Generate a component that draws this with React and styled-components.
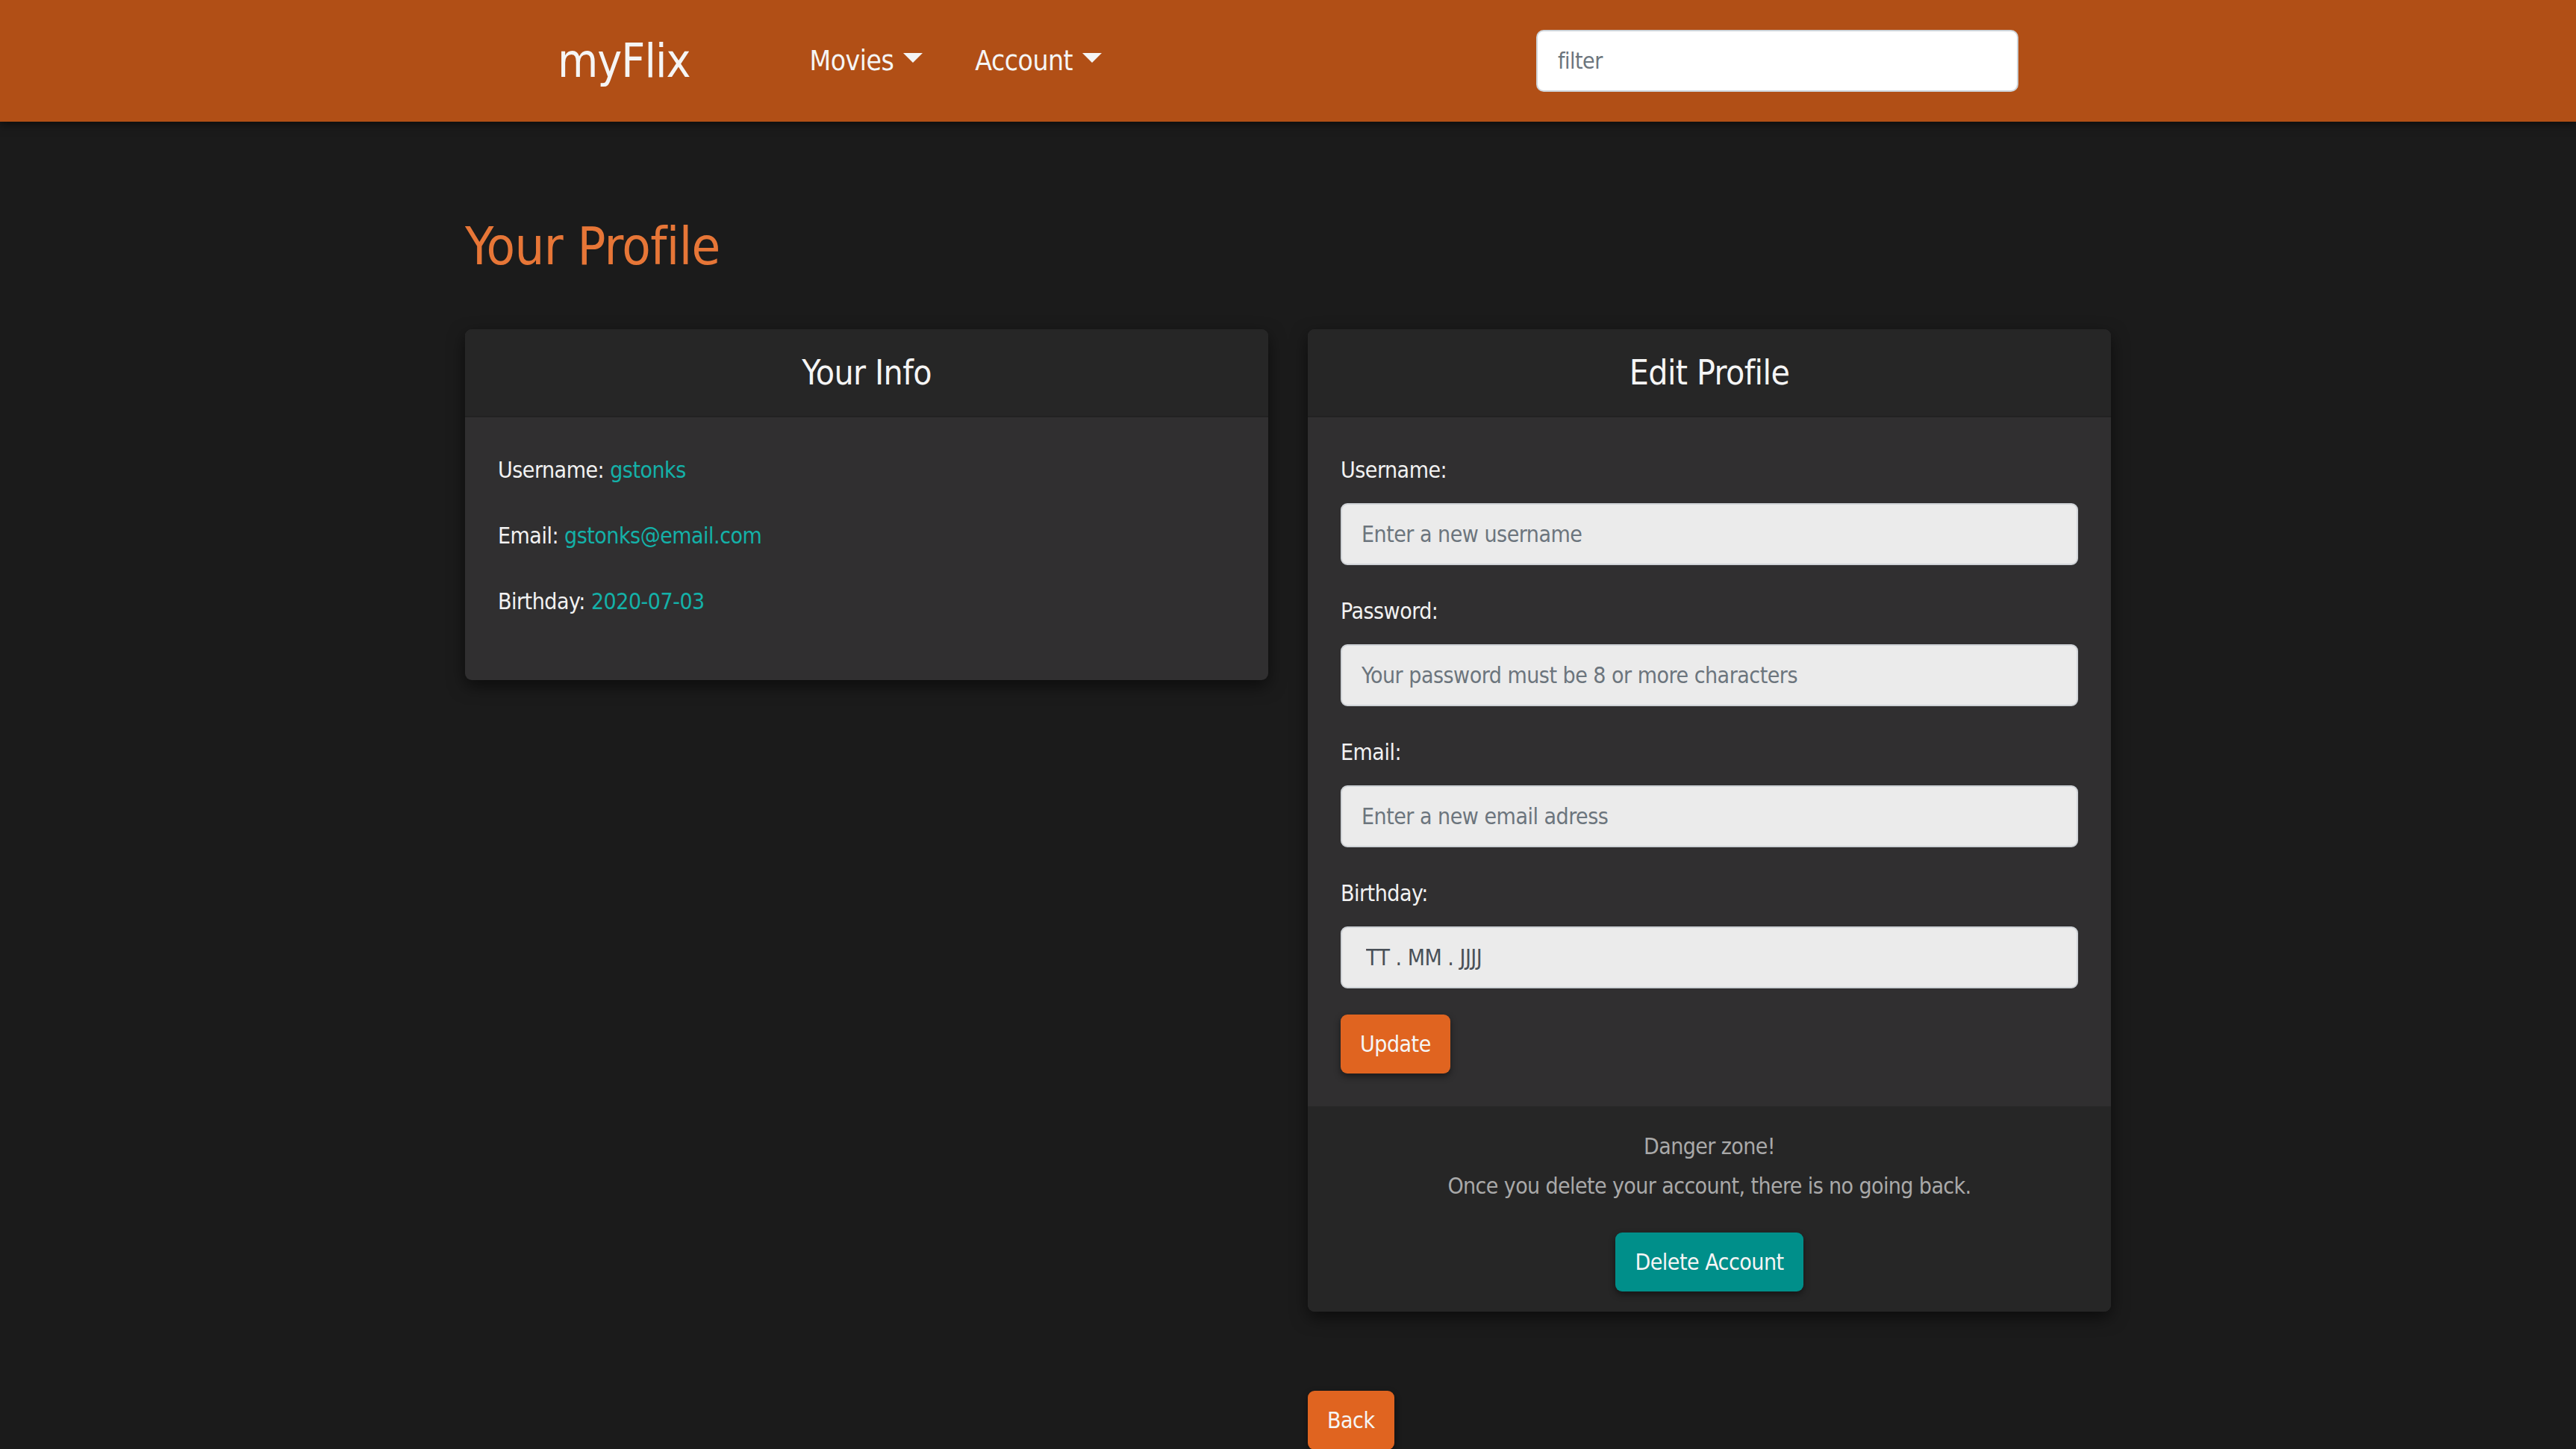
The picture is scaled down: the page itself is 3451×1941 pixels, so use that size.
import React from 'react';
import styled, { createGlobalStyle } from 'styled-components';

const GlobalStyle = createGlobalStyle`
  * {
    box-sizing: border-box;
  }
  body {
    margin: 0;
    background: #1b1b1b;
    color: #f2f2f2;
    font-family: "DejaVu Sans Condensed", "Liberation Sans Narrow", "Roboto Condensed", sans-serif;
    font-size: 30px;
    letter-spacing: -0.5px;
    line-height: 53px;
  }
`;

const Navbar = styled.nav`
  position: relative;
  z-index: 1;
  height: 163px;
  background: #b14f16;
  box-shadow: 0 3px 12px rgba(0, 0, 0, 0.6);
  display: flex;
  align-items: center;
`;

const NavInner = styled.div`
  width: 1957px;
  margin: 0 auto;
  display: flex;
  align-items: center;
`;

const Brand = styled.a`
  color: #f5f5f5;
  font-size: 62px;
  letter-spacing: -1px;
  line-height: 80px;
  margin-right: 125px;
  text-decoration: none;
`;

const NavLink = styled.a`
  display: flex;
  align-items: center;
  padding: 0 35px;
  color: #f5f5f5;
  font-size: 37px;
  letter-spacing: -0.5px;
  text-decoration: none;
`;

const Caret = styled.span`
  display: inline-block;
  margin-left: 13px;
  border-top: 13px solid #f5f5f5;
  border-left: 13px solid transparent;
  border-right: 13px solid transparent;
  transform: translateY(-4px);
`;

const Filter = styled.input`
  margin-left: auto;
  width: 646px;
  height: 83px;
  padding: 0 27px;
  border: 2px solid #ced4da;
  border-radius: 10px;
  background: #fff;
  font-family: inherit;
  font-size: 30px;
  letter-spacing: -0.5px;
  color: #495057;
  &::placeholder {
    color: #6c757d;
  }
`;

const Main = styled.main`
  width: 2205px;
  margin: 0 auto;
`;

const Title = styled.h1`
  margin: 120px 0 64px;
  color: #e77637;
  font-size: 70px;
  font-weight: 400;
  letter-spacing: -0.6px;
  line-height: 94px;
`;

const Columns = styled.div`
  display: grid;
  grid-template-columns: 1076px 1076px;
  column-gap: 53px;
  align-items: start;
`;

const Card = styled.section`
  background: #302f30;
  border-radius: 9px;
  overflow: hidden;
  box-shadow: 0 8px 22px rgba(0, 0, 0, 0.55);
`;

const CardHeader = styled.header`
  height: 118px;
  display: flex;
  align-items: center;
  justify-content: center;
  background: #262626;
  border-bottom: 2px solid #222;
`;

const CardTitle = styled.h4`
  margin: 0;
  font-size: 46px;
  font-weight: 400;
  letter-spacing: -0.6px;
  line-height: 64px;
  color: #f5f5f5;
`;

const CardBody = styled.div`
  padding: 44px;
`;

const InfoRow = styled.p`
  margin: 0 0 35px;
`;

const Value = styled.span`
  color: #14b1a8;
`;

const FormGroup = styled.div`
  margin-bottom: 35px;
`;

const Label = styled.label`
  display: block;
  margin-bottom: 18px;
  color: #f2f2f2;
`;

const Input = styled.input`
  display: block;
  width: 100%;
  height: 83px;
  padding: 0 26px 0 ${(p) => (p.$date ? 32 : 26)}px;
  border: 2px solid #cfd3d7;
  border-radius: 9px;
  background: #ebebeb;
  font-family: inherit;
  font-size: 30px;
  letter-spacing: -0.5px;
  color: #495057;
  &::placeholder {
    color: ${(p) => (p.$date ? '#495057' : '#6c757d')};
  }
`;

const Button = styled.button`
  height: 79px;
  padding: 0 26px;
  border: none;
  border-radius: 9px;
  background: ${(p) => (p.$variant === 'teal' ? '#008f8a' : '#e06420')};
  color: #f5f5f5;
  font-family: inherit;
  font-size: 30px;
  letter-spacing: -0.5px;
  box-shadow: 0 4px 10px rgba(0, 0, 0, 0.45);
  cursor: pointer;
`;

const CardFooter = styled.footer`
  padding: 27px 44px;
  background: #262626;
  text-align: center;
  color: #a9a9a9;
`;

const Warning = styled.p`
  margin: 0 0 36px;
  letter-spacing: -0.6px;
`;

const BackRow = styled.div`
  grid-column: 2;
  margin-top: 106px;
`;

export default function App() {
  return (
    <>
      <GlobalStyle />
      <Navbar>
        <NavInner>
          <Brand href="#">myFlix</Brand>
          <NavLink href="#">
            Movies
            <Caret />
          </NavLink>
          <NavLink href="#">
            Account
            <Caret />
          </NavLink>
          <Filter placeholder="filter" />
        </NavInner>
      </Navbar>
      <Main>
        <Title>Your Profile</Title>
        <Columns>
          <Card>
            <CardHeader>
              <CardTitle>Your Info</CardTitle>
            </CardHeader>
            <CardBody>
              <InfoRow>
                Username: <Value>gstonks</Value>
              </InfoRow>
              <InfoRow>
                Email: <Value>gstonks@email.com</Value>
              </InfoRow>
              <InfoRow>
                Birthday: <Value>2020-07-03</Value>
              </InfoRow>
            </CardBody>
          </Card>
          <Card>
            <CardHeader>
              <CardTitle>Edit Profile</CardTitle>
            </CardHeader>
            <CardBody>
              <FormGroup>
                <Label>Username:</Label>
                <Input placeholder="Enter a new username" />
              </FormGroup>
              <FormGroup>
                <Label>Password:</Label>
                <Input placeholder="Your password must be 8 or more characters" />
              </FormGroup>
              <FormGroup>
                <Label>Email:</Label>
                <Input placeholder="Enter a new email adress" />
              </FormGroup>
              <FormGroup>
                <Label>Birthday:</Label>
                <Input $date placeholder="TT . MM . JJJJ" />
              </FormGroup>
              <Button>Update</Button>
            </CardBody>
            <CardFooter>
              <Warning>
                Danger zone!
                <br />
                Once you delete your account, there is no going back.
              </Warning>
              <Button $variant="teal">Delete Account</Button>
            </CardFooter>
          </Card>
          <BackRow>
            <Button>Back</Button>
          </BackRow>
        </Columns>
      </Main>
    </>
  );
}
